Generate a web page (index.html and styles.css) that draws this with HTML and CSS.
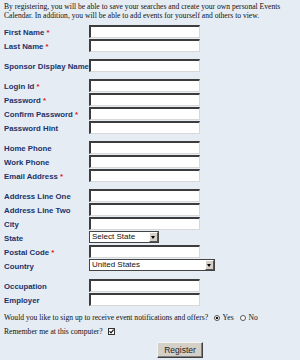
FILE: index.html
```html
<!DOCTYPE html>
<html lang="en">
<head>
    <meta charset="UTF-8">
    <title>Register</title>
    <link rel="stylesheet" href="styles.css">
</head>
<body>
    <p class="intro">
        By registering, you will be able to save your searches and create your own personal Events
        Calendar. In addition, you will be able to add events for yourself and others to view.
    </p>
    <table class="reg">
        <tr><th>First Name <span class="req">*</span></th><td><input type="text"></td></tr>
        <tr><th>Last Name <span class="req">*</span></th><td><input type="text"></td></tr>
        <tr class="gap"><td colspan="2"></td></tr>
        <tr><th>Sponsor Display Name</th><td><input type="text"></td></tr>
        <tr class="gap"><td colspan="2"></td></tr>
        <tr><th>Login Id <span class="req">*</span></th><td><input type="text"></td></tr>
        <tr><th>Password <span class="req">*</span></th><td><input type="password"></td></tr>
        <tr><th>Confirm Password <span class="req">*</span></th><td><input type="password"></td></tr>
        <tr><th>Password Hint</th><td><input type="text"></td></tr>
        <tr class="gap"><td colspan="2"></td></tr>
        <tr><th>Home Phone</th><td><input type="text"></td></tr>
        <tr><th>Work Phone</th><td><input type="text"></td></tr>
        <tr><th>Email Address <span class="req">*</span></th><td><input type="text"></td></tr>
        <tr class="gap"><td colspan="2"></td></tr>
        <tr><th>Address Line One</th><td><input type="text"></td></tr>
        <tr><th>Address Line Two</th><td><input type="text"></td></tr>
        <tr><th>City</th><td><input type="text"></td></tr>
        <tr><th>State</th><td>
            <span class="select state"><select><option>Select State</option></select><span class="arrow"></span></span>
        </td></tr>
        <tr><th>Postal Code <span class="req">*</span></th><td><input type="text"></td></tr>
        <tr><th>Country</th><td>
            <span class="select country"><select><option>United States</option></select><span class="arrow"></span></span>
        </td></tr>
        <tr class="gap"><td colspan="2"></td></tr>
        <tr><th>Occupation</th><td><input type="text"></td></tr>
        <tr><th>Employer</th><td><input type="text"></td></tr>
    </table>
    <div class="options">
        <p class="optin">
            Would you like to sign up to receive event notifications and offers?
            <input type="radio" name="offers" checked> Yes
            <input type="radio" name="offers"> No
        </p>
        <p class="optin">
            Remember me at this computer?
            <span class="check"><svg width="7" height="7" viewBox="0 0 7 7"><rect x="0.5" y="0.5" width="6" height="6" fill="#fff" stroke="#333"/><path d="M1.5 3.2 L3 4.8 L5.6 1.6" fill="none" stroke="#111" stroke-width="1.1"/></svg></span>
        </p>
    </div>
    <div class="actions"><button type="submit">Register</button></div>
</body>
</html>
```

FILE: styles.css
```css
body{
    margin: 2px 4px;
    background: #e5ecf4;
    font-family: "Liberation Serif", serif;
    font-size: 7.6px;
    color: #111;
}
.intro{
    margin: 0;
    line-height: 9px;
}
.reg{
    margin-top: 5px;
    border-spacing: 0;
}
.reg th{
    width: 85px;
    padding: 0;
    text-align: left;
    vertical-align: middle;
    white-space: nowrap;
    font-family: "Liberation Sans", Arial, sans-serif;
    font-size: 7.8px;
    font-weight: bold;
    color: #1c3268;
}
.reg td{
    padding: 0 0 1px 0;
    height: 13px;
    vertical-align: top;
}
.reg .gap td{
    height: 6px;
    padding: 0;
}
.req{
    color: #e02020;
}
.reg input{
    display: block;
    box-sizing: border-box;
    width: 111px;
    height: 13px;
    margin: 0;
    padding: 0;
    background: #fff;
    border-top: 2px solid #3c3c3c;
    border-left: 2px solid #3c3c3c;
    border-right: 1px solid #d8d8d8;
    border-bottom: 1px solid #d8d8d8;
}
.select{
    position: relative;
    display: block;
    height: 12px;
}
.select select{
    appearance: none;
    box-sizing: border-box;
    height: 12px;
    margin: 0;
    padding: 0 0 0 2px;
    border: 1px solid #444;
    background: #fff;
    font-family: "Liberation Sans", Arial, sans-serif;
    font-size: 8px;
    line-height: 10px;
    color: #111;
}
.state select{
    width: 70px;
}
.country select{
    width: 126px;
}
.select .arrow{
    position: absolute;
    top: 1px;
    width: 9px;
    height: 10px;
    box-sizing: border-box;
    background: #d4d0c8;
    border: 1px solid;
    border-color: #fff #555 #555 #fff;
}
.state .arrow{
    left: 60px;
}
.country .arrow{
    left: 116px;
}
.select .arrow::after{
    content: "";
    position: absolute;
    left: 1px;
    top: 3px;
    border-left: 2.5px solid transparent;
    border-right: 2.5px solid transparent;
    border-top: 3px solid #000;
}
.options{
    margin-top: 4px;
}
.optin{
    margin: 0;
    line-height: 14px;
}
.optin input[type=radio]{
    appearance: none;
    width: 6px;
    height: 6px;
    margin: 0 1px 0 4px;
    border: 1px solid #555;
    border-radius: 50%;
    background: #fff;
    vertical-align: -1px;
}
.optin input[type=radio]:checked{
    background: radial-gradient(circle, #111 1.2px, #fff 1.6px);
}
.check{
    display: inline-block;
    margin-left: 3px;
    vertical-align: -1px;
}
.check svg{
    display: block;
}
.actions{
    margin-top: 3px;
    padding-left: 153px;
}
.actions button{
    width: 46px;
    height: 16px;
    padding: 0;
    background: #d4d0c8;
    border: 1px solid;
    border-color: #f4f4f4 #404040 #404040 #f4f4f4;
    box-shadow: inset -1px -1px 0 #808080;
    font-family: "Liberation Sans", Arial, sans-serif;
    font-size: 8.5px;
    color: #222;
}
```
